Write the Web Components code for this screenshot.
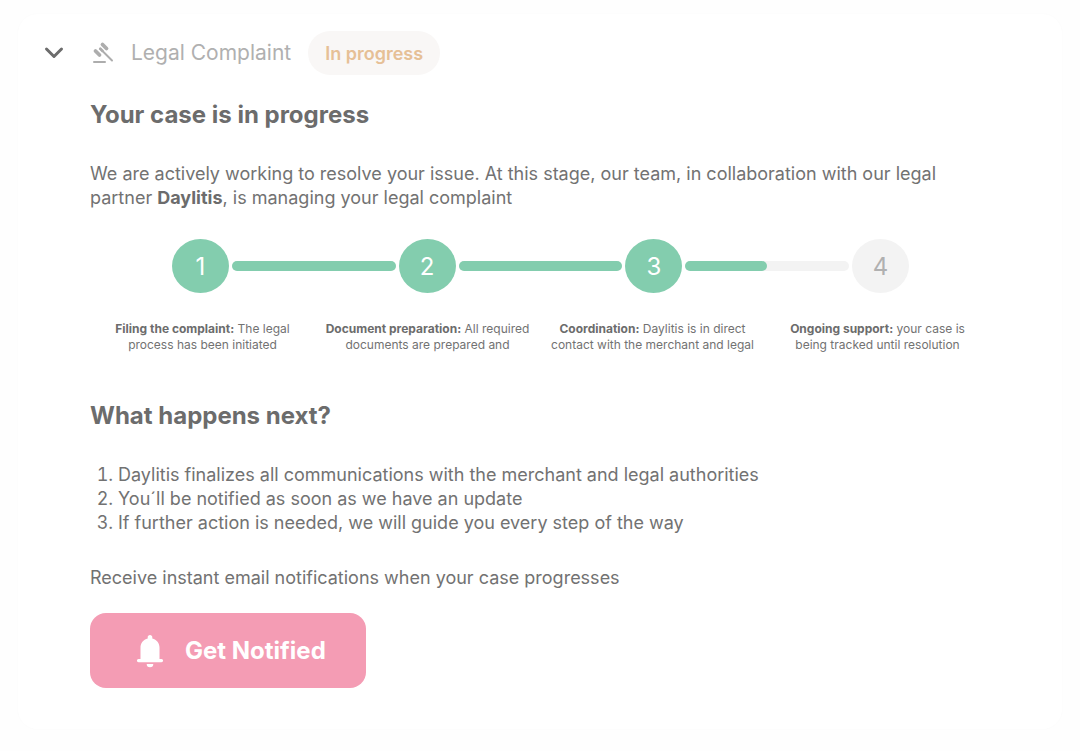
<!DOCTYPE html>
<html lang="en">
<head>
<meta charset="utf-8">
<meta name="viewport" content="width=device-width, initial-scale=1">
<title>Legal Complaint</title>
<style>
  body {
    margin: 0;
    background: #fefefe;
    color: #727272;
    font: 400 18px/24px Inter, "Liberation Sans", sans-serif;
    --ink: #6c6c6c;
    --muted: #b0b0b0;
    --green: #83cdae;
    --idle: #f3f3f3;
    --pink: #f49cb4;
  }
  b { font-weight: 700; color: var(--ink); }
</style>
</head>
<body>
<case-card>
  <span slot="title">Legal Complaint</span>
  <status-pill slot="status">In progress</status-pill>

  <case-section heading="Your case is in progress">
    <p>We are actively working to resolve your issue. At this stage, our team, in collaboration with our legal partner <b>Daylitis</b>, is managing your legal complaint</p>
  </case-section>

  <progress-track>
    <progress-step number="1" fill="100"></progress-step>
    <progress-step number="2" fill="100"></progress-step>
    <progress-step number="3" fill="50"></progress-step>
    <progress-step number="4" pending></progress-step>
    <step-label slot="labels"><b slot="name">Filing the complaint:</b> The legal<br>process has been initiated</step-label>
    <step-label slot="labels"><b slot="name">Document preparation:</b> All required<br>documents are prepared and</step-label>
    <step-label slot="labels"><b slot="name">Coordination:</b> Daylitis is in direct<br>contact with the merchant and legal</step-label>
    <step-label slot="labels"><b slot="name">Ongoing support:</b> your case is<br>being tracked until resolution</step-label>
  </progress-track>

  <case-section heading="What happens next?">
    <next-steps></next-steps>
    <p>Receive instant email notifications when your case progresses</p>
  </case-section>

  <notify-button>Get Notified</notify-button>
</case-card>

<script>
const define = (name, html, setup) => {
  const template = document.createElement('template');
  template.innerHTML = html;
  customElements.define(name, class extends HTMLElement {
    constructor() {
      super();
      this.attachShadow({ mode: 'open' }).append(template.content.cloneNode(true));
    }
    connectedCallback() {
      if (setup) setup(this, this.shadowRoot);
    }
  });
};

define('case-card', `
  <style>
    :host { display: block; margin: 14px 18px 20px; padding: 17px 72px 41px; background: #fff; border-radius: 20px; box-shadow: 0 0 3px rgba(0,0,0,.02); }
    header { display: flex; align-items: center; height: 44px; margin-left: -48px; }
    button { display: flex; padding: 0; margin: 0 26px 0 0; border: 0; background: none; color: var(--ink); }
    h1 { margin: 0 17px 0 15px; font-size: 21px; line-height: 32px; font-weight: 400; color: var(--muted); }
  </style>
  <header>
    <button type="button" aria-label="Collapse" aria-expanded="true">
      <svg width="22" height="22" viewBox="0 0 22 22" fill="none" stroke="currentColor" stroke-width="3" stroke-linecap="round" stroke-linejoin="round"><path d="M4.500 7L12 14.500L19.500 7"/></svg>
    </button>
    <svg width="26" height="26" viewBox="0 0 26 26" aria-hidden="true" stroke="#adadad" fill="none" stroke-linecap="round">
      <path d="M4 22H15" stroke-width="2"/>
      <path d="M10 8.500L22 20.500" stroke-width="2"/>
      <path d="M12.500 4.500L16.500 8.500M5.500 11L9.500 15" stroke-width="3.800"/>
      <path d="M9.700 8.200L13 11.500" stroke-width="2.600" stroke-linecap="butt"/>
    </svg>
    <h1><slot name="title"></slot></h1>
    <slot name="status"></slot>
  </header>
  <slot></slot>`);

define('status-pill', `
  <style>
    :host { display: block; padding: 11px 17px 9px; border-radius: 22px; background: #f9f7f6; color: #e6c096; font-size: 18px; line-height: 24px; font-weight: 600; }
  </style>
  <slot></slot>`);

define('case-section', `
  <style>
    :host { display: block; }
    h2 { margin: 24px 0 31px; font-size: 24px; line-height: 32px; font-weight: 700; color: var(--ink); }
    ::slotted(p) { margin: 0; }
  </style>
  <h2></h2>
  <slot></slot>`,
  (el, root) => { root.querySelector('h2').textContent = el.getAttribute('heading'); });

define('progress-track', `
  <style>
    :host { display: block; margin: 29px 0 47px; }
    .track { display: flex; padding: 0 81px 0 82px; }
    .labels { display: grid; grid-template-columns: repeat(4, 1fr); margin-top: 28px; }
  </style>
  <div class="track"><slot></slot></div>
  <div class="labels"><slot name="labels"></slot></div>`);

define('progress-step', `
  <style>
    :host { display: flex; flex: 1; align-items: center; }
    :host([pending]) { flex: none; }
    .dot { flex: none; box-sizing: border-box; display: grid; place-items: center; width: 57px; height: 54px; padding-top: 2px; border-radius: 50%; background: var(--green); color: #fff; font-size: 24px; font-weight: 400; }
    :host([pending]) .dot { background: var(--idle); color: var(--muted); }
    .bar { flex: 1; height: 10px; margin: 0 3px; border-radius: 5px; background: var(--idle); }
    .fill { height: 10px; border-radius: 5px; background: var(--green); }
    :host([pending]) .bar { display: none; }
  </style>
  <span class="dot"></span>
  <div class="bar"><div class="fill"></div></div>`,
  (el, root) => {
    root.querySelector('.dot').textContent = el.getAttribute('number');
    root.querySelector('.fill').style.width = (el.getAttribute('fill') || 0) + '%';
  });

define('step-label', `
  <style>
    :host { display: block; text-align: center; white-space: nowrap; font-size: 12px; line-height: 16px; }
  </style>
  <slot name="name"></slot><slot></slot>`);

define('next-steps', `
  <style>
    :host { display: block; margin-bottom: 31px; }
    ol { margin: 0; padding-left: 28px; }
  </style>
  <ol>
    <li>Daylitis finalizes all communications with the merchant and legal authorities</li>
    <li>You´ll be notified as soon as we have an update</li>
    <li>If further action is needed, we will guide you every step of the way</li>
  </ol>`);

define('notify-button', `
  <style>
    :host { display: block; margin-top: 23px; }
    button { display: flex; align-items: center; gap: 19px; height: 75px; padding: 0 40px 0 43px; border: 0; border-radius: 16px; background: var(--pink); color: #fff; font: 700 24px/32px Inter, "Liberation Sans", sans-serif; }
  </style>
  <button type="button">
    <svg width="33" height="36" viewBox="0 0 33 36" fill="#fff" aria-hidden="true">
      <path d="M17 2C15.600 2 14.700 3 14.700 4.200V5.400C10.300 6.400 7.500 10 7.500 14.500V26H5.500A1.600 1.600 0 0 0 5.500 29.200H28.500A1.600 1.600 0 0 0 28.500 26H26.500V14.500C26.500 10 23.700 6.400 19.300 5.400V4.200C19.300 3 18.400 2 17 2ZM13.700 31A3.300 3.300 0 0 0 20.300 31Z"/>
    </svg>
    <slot></slot>
  </button>`);
</script>
</body>
</html>
